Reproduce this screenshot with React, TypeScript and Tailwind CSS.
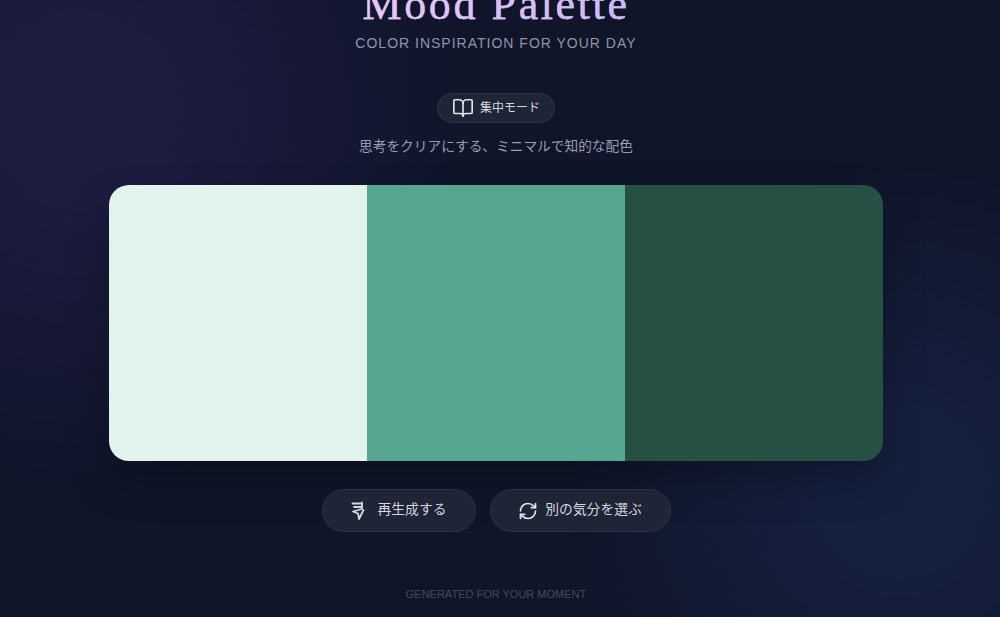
import { BookOpen, RefreshCw } from "lucide-react";

const sans = "font-['Liberation_Sans','Noto_Sans_CJK_JP',sans-serif]";

function SparkGlyph() {
  return (
    <svg width="15" height="20" viewBox="0 0 15 20" fill="none" stroke="currentColor" strokeWidth="1.8" strokeLinecap="round" strokeLinejoin="round">
      <path d="M1.500 2.500h8M3 6h8M11 1.500v6.500L2 10.500l5 2 1 5.500 4.500-9" />
    </svg>
  );
}

export default function App() {
  return (
    <div className={`${sans} relative h-[617px] w-[1000px] overflow-hidden bg-[#10152a]`}>
      <div className="absolute inset-0 bg-[radial-gradient(circle_at_80px_110px,#1d1b40_0px,#1d1b40_90px,rgba(29,27,64,0)_380px),radial-gradient(circle_at_900px_490px,#15203f_0px,#15203f_70px,rgba(21,32,63,0)_330px)]" />
      <div className="relative flex w-[992px] flex-col items-center">
        <h1 className="-mt-[20px] bg-gradient-to-r from-[#e9c9f5] to-[#c9b8f5] bg-clip-text font-['Liberation_Serif',serif] text-[44px] leading-[50px] tracking-[2.6px] text-transparent [-webkit-text-stroke:0.4px_#d8c4f5]">
          Mood Palette
        </h1>
        <p className="mt-[3px] text-sm leading-5 tracking-[1px] text-[#8f96a8]">COLOR INSPIRATION FOR YOUR DAY</p>

        <div className="mt-[40px] flex h-[30px] w-[118px] items-center justify-center gap-[6px] rounded-full border border-[#2d3347] bg-[#1f2437] text-xs text-[#d4d7df]">
          <BookOpen size={22} strokeWidth={1.8} className="text-[#e2e5ea]" />
          <span>集中モード</span>
        </div>
        <p className="mt-[14px] text-[13.7px] leading-5 text-[#989eb0]">思考をクリアにする、ミニマルで知的な配色</p>

        <div className="mt-[28px] grid h-[276px] w-[774px] grid-cols-3 overflow-hidden rounded-[20px] shadow-[0_20px_40px_rgba(0,0,0,0.25)]">
          <div className="bg-[#e2f3ee]" />
          <div className="bg-[#56a690]" />
          <div className="bg-[#255043]" />
        </div>

        <div className="mt-[28px] flex gap-[14px]">
          <button className="flex h-[43px] w-[154px] items-center justify-center gap-[12px] rounded-full border border-[#2d3347] bg-[#1f2437] text-[13.8px] text-[#d4d7df]">
            <SparkGlyph />
            <span>再生成する</span>
          </button>
          <button className="flex h-[43px] w-[181px] items-center justify-center gap-[7px] rounded-full border border-[#2d3347] bg-[#1f2437] text-[13.8px] text-[#d4d7df]">
            <RefreshCw size={20} strokeWidth={2} className="text-[#e2e5ea]" />
            <span>別の気分を選ぶ</span>
          </button>
        </div>

        <p className="mt-[54px] text-[11px] leading-4 text-[#434a5f]">GENERATED FOR YOUR MOMENT</p>
      </div>
    </div>
  );
}
